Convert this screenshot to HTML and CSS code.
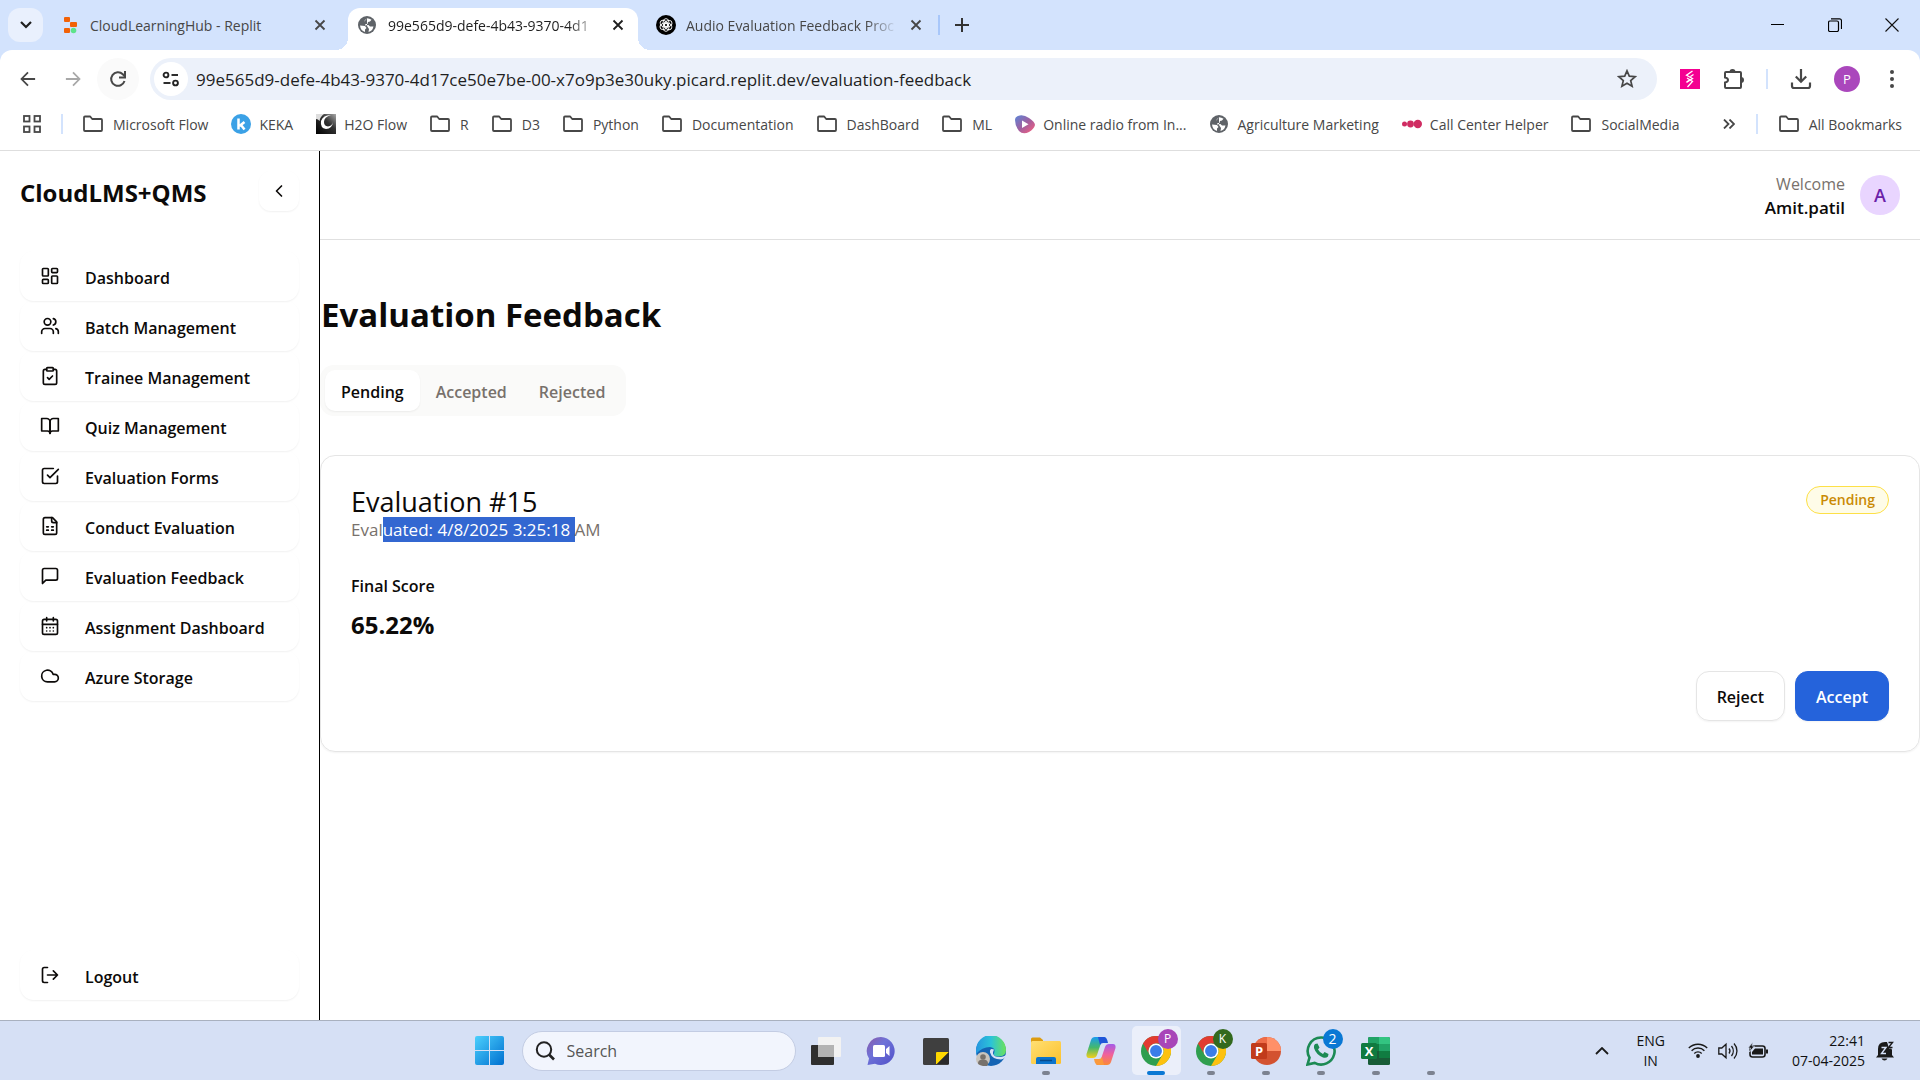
FILE: index.html
```html
<!DOCTYPE html>
<html lang="en">
<head>
<meta charset="utf-8">
<title>Evaluation Feedback</title>
<link rel="stylesheet" href="styles.css">
</head>
<body>
<svg class="sprite" aria-hidden="true">
  <defs>
    <linearGradient id="g-win" x1="0" y1="0" x2="1" y2="1"><stop offset="0" stop-color="#4cd0fd"/><stop offset="1" stop-color="#0070d0"/></linearGradient>
    <linearGradient id="g-chat" x1="0" y1="0" x2="1" y2="1"><stop offset="0" stop-color="#8b5aa8"/><stop offset=".4" stop-color="#6e72d8"/><stop offset="1" stop-color="#5150c8"/></linearGradient>
    <linearGradient id="g-edge" x1="0" y1="0" x2="1" y2="0"><stop offset="0" stop-color="#2596e0"/><stop offset=".5" stop-color="#2bc3d8"/><stop offset="1" stop-color="#6be25a"/></linearGradient>
    <linearGradient id="g-folder" x1="0" y1="0" x2="1" y2="1"><stop offset="0" stop-color="#ffdf73"/><stop offset="1" stop-color="#fcc12c"/></linearGradient>
    <linearGradient id="g-cop1" x1="0" y1="0" x2="0" y2="1"><stop offset="0" stop-color="#1a9cf0"/><stop offset=".5" stop-color="#45b86c"/><stop offset="1" stop-color="#f5cf1b"/></linearGradient>
    <linearGradient id="g-cop2" x1="0" y1="0" x2="0" y2="1"><stop offset="0" stop-color="#a45be8"/><stop offset=".5" stop-color="#f0619c"/><stop offset="1" stop-color="#fb8a35"/></linearGradient>
    <linearGradient id="g-radio" x1="0" y1="0" x2="1" y2="1"><stop offset="0" stop-color="#5b86d8"/><stop offset=".5" stop-color="#a05fa0"/><stop offset="1" stop-color="#ff5f7a"/></linearGradient>
    <linearGradient id="g-h2o" x1="0" y1="1" x2="1" y2="0"><stop offset="0" stop-color="#000"/><stop offset=".6" stop-color="#333"/><stop offset="1" stop-color="#aaa"/></linearGradient>
    <symbol id="folder" viewBox="0 0 20 20"><path d="M1 3.500q0-1 1-1h5.200l2 2.500H18q1 0 1 1V16q0 1-1 1H2q-1 0-1-1z" fill="none" stroke="#474747" stroke-width="1.800" stroke-linejoin="round"/></symbol>
    <symbol id="x" viewBox="0 0 12 12"><path d="M1.500 1.500l9 9M10.500 1.500l-9 9" stroke="currentColor" stroke-width="1.800" fill="none"/></symbol>
    <symbol id="globe" viewBox="0 0 18 18"><circle cx="9" cy="9" r="9" fill="#5f6368"/><path d="M2 9.500l5 .5 1.500 2-1.500 1.500v2.500Q2.500 14.500 2 9.500zM9 2.200q2.500 0 4.500 1.500L12 5.500l-2 .5-.5 2H7.500L7 9.500 10.500 9l1.500 1.500h3.500Q14.500 15 10.500 16l.5-3-2-3M9 2.200L7 4 6 6" fill="#fff"/></symbol>
    <symbol id="chrome" viewBox="0 0 48 48"><circle cx="24" cy="24" r="24" fill="#2f9e4f"/><path d="M3.200 12A24 24 0 0 1 44.800 12H24A12 12 0 0 0 13.600 30z" fill="#e23b30"/><path d="M44.800 12A24 24 0 0 1 24 48L34.400 30A12 12 0 0 0 34.400 18L31 12z" fill="#fdc10f"/><circle cx="24" cy="24" r="12" fill="#fff"/><circle cx="24" cy="24" r="9.500" fill="#3b7de9"/></symbol>
  </defs>
</svg>

<header class="browser">
  <div class="tabstrip">
    <button class="tab-search" aria-label="Search tabs"><svg width="12" height="8" viewBox="0 0 12 8"><path d="M1 1l5 5 5-5" fill="none" stroke="#1f1f1f" stroke-width="2.200"/></svg></button>
    <div class="tab">
      <svg class="fav" viewBox="0 0 20 20"><rect x="4" y="2" width="6" height="5" rx="1" fill="#f26207"/><rect x="10" y="7" width="7" height="5" rx="1" fill="#f26207"/><rect x="4" y="13" width="6" height="5" rx="1" fill="#f26207"/><circle cx="13.500" cy="15.500" r="2.800" fill="#5de38b"/></svg>
      <span class="tab-title">CloudLearningHub - Replit</span>
      <button class="tab-close" aria-label="Close tab"><svg width="12" height="12"><use href="#x"/></svg></button>
    </div>
    <div class="tab tab-active">
      <svg class="fav"><use href="#globe" width="18" height="18" x="0" y="1"/></svg>
      <span class="tab-title tab-fade">99e565d9-defe-4b43-9370-4d1</span>
      <button class="tab-close" aria-label="Close tab"><svg width="12" height="12"><use href="#x"/></svg></button>
    </div>
    <div class="tab">
      <svg class="fav" viewBox="0 0 20 20"><circle cx="10" cy="10" r="10" fill="#000"/><g fill="none" stroke="#fff" stroke-width=".9"><ellipse cx="10" cy="7.600" rx="3" ry="4"/><ellipse cx="10" cy="7.600" rx="3" ry="4" transform="rotate(60 10 10)"/><ellipse cx="10" cy="7.600" rx="3" ry="4" transform="rotate(120 10 10)"/><ellipse cx="10" cy="7.600" rx="3" ry="4" transform="rotate(180 10 10)"/><ellipse cx="10" cy="7.600" rx="3" ry="4" transform="rotate(240 10 10)"/><ellipse cx="10" cy="7.600" rx="3" ry="4" transform="rotate(300 10 10)"/></g></svg>
      <span class="tab-title tab-fade">Audio Evaluation Feedback Proc</span>
      <button class="tab-close" aria-label="Close tab"><svg width="12" height="12"><use href="#x"/></svg></button>
    </div>
    <span class="rule rule-strong"></span>
    <button class="new-tab" aria-label="New tab"><svg width="14" height="14" viewBox="0 0 14 14"><path d="M7 0v14M0 7h14" stroke="#333" stroke-width="2"/></svg></button>
    <div class="window-controls">
      <button aria-label="Minimize"><svg width="14" height="14" viewBox="0 0 14 14"><path d="M0 6.500h13" stroke="#000"/></svg></button>
      <button aria-label="Restore"><svg width="14" height="14" viewBox="0 0 14 14"><rect x=".5" y="3" width="10" height="10.500" rx="1.500" fill="none" stroke="#000" stroke-width="1.200"/><path d="M3 .8h8.500q2 0 2 2V11" fill="none" stroke="#000" stroke-width="1.200"/></svg></button>
      <button aria-label="Close"><svg width="14" height="14" viewBox="0 0 14 14"><path d="M.5.500l13 13M13.500.500l-13 13" stroke="#111" stroke-width="1.100"/></svg></button>
    </div>
  </div>

  <div class="toolbar">
    <button class="tool" aria-label="Back"><svg width="16" height="16" viewBox="0 0 18 18"><path d="M17 9H2M9 1.500L1.700 9 9 16.500" fill="none" stroke="#474747" stroke-width="2"/></svg></button>
    <button class="tool" aria-label="Forward"><svg width="16" height="16" viewBox="0 0 18 18"><path d="M1 9h15M9 1.500L16.300 9 9 16.500" fill="none" stroke="#a8a8a8" stroke-width="2"/></svg></button>
    <button class="tool tool-hover" aria-label="Reload"><svg width="18" height="18" viewBox="0 0 18 18"><path d="M15.500 11A6.800 6.800 0 1 1 13.800 4.200L16 6.500" fill="none" stroke="#474747" stroke-width="2"/><path d="M16 1v6.500h-6" fill="none" stroke="#474747" stroke-width="2"/></svg></button>
    <div class="omnibox">
      <button class="site-info" aria-label="Site information"><svg width="18" height="16" viewBox="0 0 18 16"><g fill="none" stroke="#222" stroke-width="1.900"><circle cx="4" cy="4" r="2.400"/><path d="M9.500 4H16"/><circle cx="13.500" cy="12" r="2.400"/><path d="M1.500 12H8.500"/></g></svg></button>
      <input class="url" type="text" aria-label="Address" value="99e565d9-defe-4b43-9370-4d17ce50e7be-00-x7o9p3e30uky.picard.replit.dev/evaluation-feedback">
      <button class="star" aria-label="Bookmark this tab"><svg width="20" height="20" viewBox="0 0 20 20"><path d="M10 1.800l2.300 5.400 5.900.5-4.500 3.900 1.400 5.700L10 14.200l-5.100 3.100 1.400-5.700L1.800 7.700l5.900-.5z" fill="none" stroke="#474747" stroke-width="1.700"/></svg></button>
    </div>
    <div class="tool-actions">
      <button aria-label="Extension"><svg width="20" height="20" viewBox="0 0 20 20"><rect width="20" height="20" fill="#f40091"/><path d="M12.500 2L6.500 6.200l6 3.300-6 4M13.500 5.500l-3 2M7 9l5.500 3.500-5 5.500M6.500 13l3-2" stroke="#fff" stroke-width="1.300" fill="none"/></svg></button>
      <button aria-label="Extensions"><svg width="22" height="22" viewBox="0 0 22 22"><path d="M3 5q0-1 1-1h14q1 0 1 1v14q0 1-1 1H4q-1 0-1-1v-4.500q3-.5 3-2.500T3 9.500z" fill="none" stroke="#474747" stroke-width="2"/><path d="M7.500 4a3 3 0 0 1 6 0zM19 9a3 3 0 0 1 0 6z" fill="#474747"/></svg></button>
      <span class="rule"></span>
      <button aria-label="Downloads"><svg width="22" height="22" viewBox="0 0 22 22"><path d="M11 1v12M5.800 8.500L11 13.700l5.200-5.200M2 14.500V18q0 2 2 2h14q2 0 2-2v-3.500" fill="none" stroke="#474747" stroke-width="2.200"/></svg></button>
      <button class="profile" aria-label="Profile">P</button>
      <button class="more" aria-label="Menu"><svg width="6" height="20" viewBox="0 0 6 20"><g fill="#474747"><circle cx="3" cy="3" r="2"/><circle cx="3" cy="10" r="2"/><circle cx="3" cy="17" r="2"/></g></svg></button>
    </div>
  </div>

  <nav class="bookmarks" aria-label="Bookmarks">
    <button aria-label="Apps"><svg width="18" height="18" viewBox="0 0 18 18"><g fill="none" stroke="#474747" stroke-width="1.800"><rect x="1" y="1" width="5.500" height="5.500"/><rect x="11.500" y="1" width="5.500" height="5.500"/><rect x="1" y="11.500" width="5.500" height="5.500"/><rect x="11.500" y="11.500" width="5.500" height="5.500"/></g></svg></button>
    <span class="rule"></span>
    <div class="bookmarks-list">
      <a href="#" class="bm bm-folder"><svg><use href="#folder"/></svg>Microsoft Flow</a>
      <a href="#" class="bm"><svg viewBox="0 0 20 20"><circle cx="10" cy="10" r="10" fill="#3ba1e6"/><path d="M7.500 4.500v11M13.500 8l-5 4M10 11l3.500 4.500" stroke="#fff" stroke-width="2.500" fill="none"/></svg>KEKA</a>
      <a href="#" class="bm"><svg viewBox="0 0 20 20"><rect width="20" height="20" fill="url(#g-h2o)"/><path d="M0 0h8Q4 3 3.500 7 2 5 0 5z" fill="#ddd"/><path d="M15 1Q7 1 5 7q-1 7 5 8 6 0 7-7-1 4-5 4.500Q8 12 8 8q0-5 7-7z" fill="#fff"/></svg>H2O Flow</a>
      <a href="#" class="bm bm-folder"><svg><use href="#folder"/></svg>R</a>
      <a href="#" class="bm bm-folder"><svg><use href="#folder"/></svg>D3</a>
      <a href="#" class="bm bm-folder"><svg><use href="#folder"/></svg>Python</a>
      <a href="#" class="bm bm-folder"><svg><use href="#folder"/></svg>Documentation</a>
      <a href="#" class="bm bm-folder"><svg><use href="#folder"/></svg>DashBoard</a>
      <a href="#" class="bm bm-folder"><svg><use href="#folder"/></svg>ML</a>
      <a href="#" class="bm"><svg viewBox="0 0 20 20"><path d="M3 2Q8 0 14 4q6 4 6 7-1 4-6 7-6 3-10-1Q0 12 0 6q0-3 3-4z" fill="url(#g-radio)"/><path d="M7 6.500v7.500l6.500-3.800z" fill="#fff"/></svg>Online radio from In...</a>
      <a href="#" class="bm"><svg viewBox="-1 -1 20 20"><use href="#globe" width="18" height="18"/></svg>Agriculture Marketing</a>
      <a href="#" class="bm"><svg viewBox="0 0 20 20"><g fill="#d02c62"><circle cx="2.500" cy="10" r="2.500"/><circle cx="8.500" cy="10" r="3.400"/><circle cx="15.800" cy="10" r="4.200"/></g></svg>Call Center Helper</a>
      <a href="#" class="bm bm-folder"><svg><use href="#folder"/></svg>SocialMedia</a>
    </div>
    <div class="bookmarks-end">
      <button aria-label="More bookmarks"><svg width="12" height="10" viewBox="0 0 12 10"><path d="M1 .5L5.500 5 1 9.500M6.500.500L11 5 6.500 9.500" fill="none" stroke="#474747" stroke-width="1.800"/></svg></button>
      <span class="rule"></span>
      <a href="#" class="bm bm-folder"><svg><use href="#folder"/></svg>All Bookmarks</a>
    </div>
  </nav>
</header>

<div class="app">
  <aside class="sidebar">
    <div class="brand">
      <span class="brand-name">CloudLMS+QMS</span>
      <button class="collapse" aria-label="Collapse sidebar"><svg class="icon" viewBox="0 0 24 24"><path d="m15 18-6-6 6-6"/></svg></button>
    </div>
    <nav class="menu" aria-label="Main">
      <a href="#"><svg class="icon" viewBox="0 0 24 24"><rect width="7" height="9" x="3" y="3" rx="1"/><rect width="7" height="5" x="14" y="3" rx="1"/><rect width="7" height="9" x="14" y="12" rx="1"/><rect width="7" height="5" x="3" y="16" rx="1"/></svg><span>Dashboard</span></a>
      <a href="#"><svg class="icon" viewBox="0 0 24 24"><path d="M16 21v-2a4 4 0 0 0-4-4H6a4 4 0 0 0-4 4v2"/><circle cx="9" cy="7" r="4"/><path d="M22 21v-2a4 4 0 0 0-3-3.870"/><path d="M16 3.130a4 4 0 0 1 0 7.750"/></svg><span>Batch Management</span></a>
      <a href="#"><svg class="icon" viewBox="0 0 24 24"><rect width="8" height="4" x="8" y="2" rx="1"/><path d="M16 4h2a2 2 0 0 1 2 2v14a2 2 0 0 1-2 2H6a2 2 0 0 1-2-2V6a2 2 0 0 1 2-2h2"/><path d="m9 14 2 2 4-4"/></svg><span>Trainee Management</span></a>
      <a href="#"><svg class="icon" viewBox="0 0 24 24"><path d="M2 3h6a4 4 0 0 1 4 4v14a3 3 0 0 0-3-3H2z"/><path d="M22 3h-6a4 4 0 0 0-4 4v14a3 3 0 0 1 3-3h7z"/></svg><span>Quiz Management</span></a>
      <a href="#"><svg class="icon" viewBox="0 0 24 24"><path d="m9 11 3 3L22 4"/><path d="M21 12v7a2 2 0 0 1-2 2H5a2 2 0 0 1-2-2V5a2 2 0 0 1 2-2h11"/></svg><span>Evaluation Forms</span></a>
      <a href="#"><svg class="icon" viewBox="0 0 24 24"><path d="M15 2H6a2 2 0 0 0-2 2v16a2 2 0 0 0 2 2h12a2 2 0 0 0 2-2V7Z"/><path d="M14 2v4a2 2 0 0 0 2 2h4M8 13h2M14 13h2M8 17h2M14 17h2"/></svg><span>Conduct Evaluation</span></a>
      <a href="#"><svg class="icon" viewBox="0 0 24 24"><path d="M21 15a2 2 0 0 1-2 2H7l-4 4V5a2 2 0 0 1 2-2h14a2 2 0 0 1 2 2z"/></svg><span>Evaluation Feedback</span></a>
      <a href="#"><svg class="icon" viewBox="0 0 24 24"><path d="M8 2v4M16 2v4"/><rect width="18" height="18" x="3" y="4" rx="2"/><path d="M3 10h18M8 14h.01M12 14h.01M16 14h.01M8 18h.01M12 18h.01M16 18h.01"/></svg><span>Assignment Dashboard</span></a>
      <a href="#"><svg class="icon" viewBox="0 0 24 24"><path d="M17.500 19H9a7 7 0 1 1 6.710-9h1.790a4.500 4.500 0 1 1 0 9Z"/></svg><span>Azure Storage</span></a>
      <a href="#" class="logout"><svg class="icon" viewBox="0 0 24 24"><path d="M9 21H5a2 2 0 0 1-2-2V5a2 2 0 0 1 2-2h4M16 17l5-5-5-5M21 12H9"/></svg><span>Logout</span></a>
    </nav>
  </aside>

  <div class="page">
    <header class="topbar">
      <div class="user"><span class="muted">Welcome</span><span class="user-name">Amit.patil</span></div>
      <span class="avatar">A</span>
    </header>
    <main class="content">
      <h1>Evaluation Feedback</h1>
      <div class="tabs" role="tablist">
        <button role="tab" aria-selected="true" class="selected">Pending</button>
        <button role="tab" aria-selected="false">Accepted</button>
        <button role="tab" aria-selected="false">Rejected</button>
      </div>
      <section class="card">
        <div class="card-head">
          <div>
            <h2>Evaluation #15</h2>
            <p class="muted date">Eval<mark>uated: 4/8/2025 3:25:18 </mark>AM</p>
          </div>
          <span class="status">Pending</span>
        </div>
        <h3>Final Score</h3>
        <p class="score">65.22%</p>
        <div class="actions">
          <button class="btn">Reject</button>
          <button class="btn btn-primary">Accept</button>
        </div>
      </section>
    </main>
  </div>
</div>

<footer class="taskbar">
  <div class="task-apps">
    <button class="slot" aria-label="Start"><svg width="29" height="29" viewBox="0 0 29 29"><path d="M0 2q0-2 2-2h12v14H0zM15 0h12q2 0 2 2v12H15zM0 15h14v14H2q-2 0-2-2zM15 15h14v12q0 2-2 2H15z" fill="url(#g-win)"/></svg></button>
    <label class="task-search"><svg width="20" height="20" viewBox="0 0 20 20"><circle cx="9" cy="8.500" r="7.200" fill="none" stroke="#222" stroke-width="2"/><path d="M14 13.500l5 5" stroke="#222" stroke-width="2.600"/></svg><input type="search" placeholder="Search" aria-label="Search"></label>
    <button class="slot" aria-label="Task view"><svg width="30" height="30" viewBox="0 0 30 30"><rect x="0" y="9" width="23" height="20" rx="1" fill="#2f2f2f"/><rect x="7" y="1" width="23" height="20" rx="1" fill="#f2f2f2"/><rect x="7" y="9" width="16" height="12" fill="#b3b3b3"/></svg></button>
    <button class="slot" aria-label="Chat"><svg width="30" height="30" viewBox="0 0 30 30"><path d="M15 1a14 14 0 1 1-6 26.800L1.500 29l1.500-6.500A14 14 0 0 1 15 1z" fill="url(#g-chat)"/><rect x="7" y="9" width="12" height="12" rx="1.500" fill="#fff"/><path d="M20 13l3.500-3v10L20 17z" fill="#fff"/></svg></button>
    <button class="slot" aria-label="Sticky notes"><svg width="26" height="28" viewBox="0 0 26 28"><rect width="26" height="27" y="1" rx="1.500" fill="#3f3f3f"/><path d="M13 16q0-1 1-1h12L14 27h-1z" fill="#ffd800"/><path d="M26 15v12H14z" fill="#2a2a2a"/></svg></button>
    <button class="slot" aria-label="Edge"><svg width="30" height="30" viewBox="0 0 30 30"><circle cx="15" cy="15" r="15" fill="#1464b4"/><path d="M0 14A15 15 0 0 1 30 14q0 6-7 6.500-6 0-5-3 2-6-4-6.500Q6 11 0 18z" fill="url(#g-edge)"/><path d="M18 13.500q-1 2-1 4 1 4 8 3.500 3-.5 5-2-1 4-5 4.500-9 0-11-7-.5-5 4-3z" fill="#d8e2f6"/><circle cx="7" cy="23" r="7" fill="#c9c4bd"/><circle cx="7" cy="21" r="2.800" fill="#77716b"/><path d="M2 27.500q0-4 5-4t5 4-5 2.500-5-2.500z" fill="#77716b"/></svg></button>
    <button class="slot running" aria-label="File Explorer"><svg width="30" height="30" viewBox="0 0 30 30"><path d="M0 3q0-1.500 1.500-1.500H9l3 2.500v5H0z" fill="#dd9c10"/><rect y="5" width="30" height="23" rx="1.500" fill="url(#g-folder)"/><path d="M5 28v-5q0-2 2-2h16q2 0 2 2v5z" fill="#0c74cc"/><path d="M9 24.500h12" stroke="#074a8a" stroke-width="1.500"/></svg></button>
    <button class="slot" aria-label="Copilot"><svg width="30" height="30" viewBox="0 0 30 30"><path d="M9 1h11l-4 3-5 15q-1 3-4 3H3q-3 0-2.500-4L5 4q1-3 4-3z" fill="url(#g-cop1)"/><path d="M12 1h6q3 0 4 6h-5q-2 0-3 2z" fill="#1f55d8"/><path d="M21 29H10l4-3 5-15q1-3 4-3h4q3 0 2.500 4L25 26q-1 3-4 3z" fill="url(#g-cop2)"/><path d="M18 29h-6q-3 0-4-6h5q2 0 3-2z" fill="#fb9a3c"/></svg></button>
    <button class="slot current" aria-label="Chrome, profile P"><svg width="30" height="30"><use href="#chrome"/></svg><span class="badge badge-p">P</span></button>
    <button class="slot running" aria-label="Chrome, profile K"><svg width="30" height="30"><use href="#chrome"/></svg><span class="badge badge-k">K</span></button>
    <button class="slot running" aria-label="PowerPoint"><svg width="30" height="30" viewBox="0 0 30 30"><circle cx="16" cy="15" r="14" fill="#d35230"/><path d="M16 1a14 14 0 0 1 14 14H16z" fill="#ff9068"/><path d="M16 1v14H2A14 14 0 0 1 16 1z" fill="#ee6c47"/><rect y="7" width="16" height="16" rx="1.500" fill="#c13b1b"/><text x="8" y="20" class="glyph">P</text></svg></button>
    <button class="slot running" aria-label="WhatsApp"><svg width="30" height="30" viewBox="0 0 30 30"><path d="M15 1.500a13.500 13.500 0 1 1-6.300 25.400L1.500 28.500l2-6.800A13.500 13.500 0 0 1 15 1.500z" fill="none" stroke="#1c8a54" stroke-width="2.600"/><path d="M9 8l2.500-.5 2 4-1.500 2q2 3.500 5 4.500l1.500-2 4 2-.5 2.500q-2 2-5 1Q10 18.500 8 12q-.5-2.500 1-4z" fill="#1c8a54"/></svg><span class="badge badge-n">2</span></button>
    <button class="slot running" aria-label="Excel"><svg width="30" height="30" viewBox="0 0 30 30"><rect x="7" y="1" width="22" height="28" rx="1.500" fill="#185c37"/><path d="M7 2.500Q7 1 8.500 1H18v7H7z" fill="#21a366"/><path d="M18 1h9.500Q29 1 29 2.500V8H18z" fill="#33c481"/><path d="M7 8h11v7H7z" fill="#107c41"/><path d="M18 8h11v7H18z" fill="#21a366"/><path d="M18 15h11v7H18z" fill="#107c41"/><rect y="7" width="16" height="16" rx="1.500" fill="#0f7a40"/><text x="8" y="20" class="glyph">X</text></svg></button>
    <button class="slot running" aria-label="Running app"></button>
  </div>
  <div class="tray">
    <svg width="14" height="8" viewBox="0 0 14 8"><path d="M1 7l6-6 6 6" fill="none" stroke="#1a1a1a" stroke-width="1.800"/></svg>
    <div class="lang"><span>ENG</span><span>IN</span></div>
    <div class="tray-icons">
      <svg width="20" height="16" viewBox="0 0 20 16"><g fill="none" stroke="#1a1a1a" stroke-width="1.400"><path d="M.8 6a13 13 0 0 1 18.400 0M3.600 8.700a9 9 0 0 1 12.800 0M6.300 11.400a5.200 5.200 0 0 1 7.400 0"/></g><circle cx="10" cy="14" r="1.900" fill="#1a1a1a"/></svg>
      <svg width="20" height="18" viewBox="0 0 20 18"><path d="M.8 6h3L8 2.200v13.600L3.800 12h-3zM11 6.500a4 4 0 0 1 0 5M13.500 4a8 8 0 0 1 0 10M16 1.500a11 11 0 0 1 0 15" fill="none" stroke="#1a1a1a" stroke-width="1.300"/></svg>
      <svg width="20" height="18" viewBox="0 0 20 18"><rect x="2" y="4" width="15" height="11" rx="2.500" fill="none" stroke="#1a1a1a" stroke-width="1.600"/><path d="M7 6.500h8v6H4V10z" fill="#1a1a1a"/><path d="M18 7.500h2v4h-2z" fill="#1a1a1a"/><path d="M5 0L0 6h2.500L1.500 10l5-6H4z" fill="#1a1a1a" stroke="#d6e1f7" stroke-width=".7"/></svg>
    </div>
    <div class="clock"><span>22:41</span><span>07-04-2025</span></div>
    <svg width="18" height="20" viewBox="0 0 18 20"><path d="M2 14V8q0-7 7-7h2q4 4 5 8v5l2 2.500H0zM5.500 17.500h6q-1 2-3 2t-3-2z" fill="#1a1a1a"/><path d="M5.500 6.500h4.500l-4.500 6H10" fill="none" stroke="#d6e1f7" stroke-width="1.400"/><path d="M11 .5h7v7h-5z" fill="#d6e1f7"/><path d="M12.500 1.500h4l-4 5h4" fill="none" stroke="#1a1a1a" stroke-width="1.400"/></svg>
  </div>
</footer>
</body>
</html>
```

FILE: styles.css
```css
* { box-sizing: border-box; }

body {
  margin: 0;
  min-height: 100vh;
  display: flex;
  flex-direction: column;
  font-family: "Open Sans", "Noto Sans", sans-serif;
  font-size: 16px;
  color: #0c0a09;
  background: #fff;
}

button {
  display: inline-flex;
  align-items: center;
  justify-content: center;
  padding: 0;
  border: 0;
  background: none;
  font: inherit;
  color: inherit;
}

a { color: inherit; text-decoration: none; }
h1, h2, h3, p { margin: 0; }
svg { flex: none; display: block; }
.sprite { width: 0; height: 0; position: absolute; }

/* Browser chrome */
.browser { background: #d3e3fd; border-bottom: 1px solid #dedede; color: #474747; font-size: 14px; }

.tabstrip { display: flex; align-items: center; height: 50px; padding-left: 8px; }
.tab-search { width: 35px; height: 34px; margin-right: 7px; border-radius: 12px; background: #e9f0fd; }
.tab { display: flex; align-items: center; gap: 10px; width: 290px; height: 50px; padding: 0 12px 0 10px; }
.tab + .tab { margin-left: 8px; }
.tab-active { position: relative; height: 42px; align-self: flex-end; padding-bottom: 8px; border-radius: 12px 12px 0 0; background: #fff; color: #1f1f1f; }
.tab-active::before, .tab-active::after {
  content: "";
  position: absolute;
  bottom: 0;
  width: 12px;
  height: 12px;
}
.tab-active::before { left: -12px; background: radial-gradient(circle at 0 0, #d3e3fd 12px, #fff 12px); }
.tab-active::after { right: -12px; background: radial-gradient(circle at 100% 0, #d3e3fd 12px, #fff 12px); }
.fav { width: 20px; height: 20px; }
.tab-title { flex: 1; white-space: nowrap; }
.tab-fade {
  -webkit-mask-image: linear-gradient(90deg, #000 85%, transparent 100%);
  mask-image: linear-gradient(90deg, #000 85%, transparent 100%);
}
.tab-close { width: 16px; height: 16px; }
.rule { flex: none; width: 2px; height: 20px; background: #d3e3fd; }
.rule-strong { margin: 0 2px; background: #a8c7fa; }
.new-tab { width: 40px; height: 40px; }
.window-controls { display: flex; margin-left: auto; }
.window-controls button { width: 57px; height: 50px; }

.toolbar { display: flex; align-items: center; height: 60px; padding: 0 18px 2px 7px; border-radius: 12px 12px 0 0; background: #fff; }
.tool { width: 42px; height: 42px; margin-right: 3px; border-radius: 50%; }
.tool-hover { background: #fafafa; }
.omnibox { flex: 1; display: flex; align-items: center; height: 42px; margin-left: 8px; padding: 0 20px 0 4px; border-radius: 21px; background: #ecf1fa; }
.site-info { width: 34px; height: 34px; border-radius: 50%; background: #fff; }
.url {
  flex: 1;
  min-width: 0;
  padding: 0 8px;
  border: 0;
  outline: 0;
  background: none;
  font: 17px "Open Sans", "Noto Sans", sans-serif;
  color: #1f1f1f;
}
.tool-actions { display: flex; align-items: center; gap: 22px; margin-left: 23px; }
.profile { width: 26px; height: 26px; border-radius: 50%; background: #aa47bc; color: #fff; font-size: 13px; }
.more { width: 20px; }

.bookmarks { display: flex; align-items: center; gap: 20px; height: 40px; padding: 0 18px 12px 23px; background: #fff; white-space: nowrap; }
.bookmarks-list { display: flex; align-items: center; gap: 23px; }
.bm { display: flex; align-items: center; gap: 8px; }
.bm-folder { gap: 10px; }
.bm svg { width: 20px; height: 20px; }
.bookmarks-end { display: flex; align-items: center; gap: 21px; margin-left: auto; }

/* Application shell */
.app { flex: 1; display: flex; }
.sidebar { display: flex; flex-direction: column; width: 320px; padding: 20px; border-right: 1px solid #000; }
.brand { display: flex; align-items: center; justify-content: space-between; height: 40px; margin-bottom: 40px; }
.brand-name { padding-top: 2px; font-size: 24px; font-weight: 700; }
.collapse { width: 40px; height: 40px; border-radius: 12px; box-shadow: 0 1px 2px rgba(0, 0, 0, .06); }
.icon { width: 20px; height: 20px; fill: none; stroke: currentColor; stroke-width: 2; stroke-linecap: round; stroke-linejoin: round; }
.menu { flex: 1; display: flex; flex-direction: column; }
.menu a { display: flex; align-items: center; gap: 25px; height: 50px; padding: 0 20px; border-radius: 14px; box-shadow: 0 1px 2px rgba(0, 0, 0, .06); font-weight: 600; white-space: nowrap; }
.menu span { padding-top: 4px; }
.menu .logout { margin-top: auto; }

.page { flex: 1; min-width: 0; display: flex; flex-direction: column; }
.topbar { display: flex; align-items: center; justify-content: flex-end; gap: 15px; height: 89px; padding: 0 20px; border-bottom: 1px solid #e0e0e0; }
.user { display: flex; flex-direction: column; align-items: flex-end; padding-top: 2px; line-height: 24px; }
.user-name { font-size: 17px; font-weight: 600; }
.muted { color: #78716c; }
.avatar { display: flex; align-items: center; justify-content: center; width: 40px; height: 40px; border-radius: 50%; background: #e9d5ff; color: #6b21a8; font-size: 18px; font-weight: 600; }

.content { padding-top: 52px; }
h1 { padding-left: 1px; font-size: 33px; line-height: 45px; font-weight: 700; }
.tabs { display: inline-flex; margin: 28px 0 39px; padding: 5px; border-radius: 14px; background: #fafaf9; }
.tabs button { height: 41px; padding: 2px 16px 0; border-radius: 10px; font-weight: 600; color: #78716c; }
.tabs .selected { background: #fff; color: #0c0a09; box-shadow: 0 1px 2px rgba(0, 0, 0, .06); }

.card { padding: 30px; border: 1px solid #e5e5e5; border-radius: 15px; box-shadow: 0 1px 2px rgba(0, 0, 0, .05); }
.card-head { display: flex; align-items: flex-start; justify-content: space-between; margin-bottom: 32px; }
h2 { padding-top: 1px; font-size: 27px; line-height: 30px; font-weight: 500; }
.date { font-size: 17px; line-height: 25px; white-space: pre; }
mark { display: inline-block; background: #3367d1; color: #fff; }
.status { padding: 0 13px; border: 1px solid #fde047; border-radius: 14px; background: #fefce8; color: #ca8a04; font-size: 14px; line-height: 26px; font-weight: 600; }
h3 { font-size: 16px; line-height: 24px; font-weight: 600; }
.score { margin: 9px 0 29px; font-size: 24px; line-height: 35px; font-weight: 700; }
.actions { display: flex; justify-content: flex-end; gap: 10px; }
.btn { height: 50px; padding: 2px 20px 0; border: 1px solid #e5e5e5; border-radius: 13px; font-weight: 600; box-shadow: 0 1px 2px rgba(0, 0, 0, .05); }
.btn-primary { border-color: #2563db; background: #2563db; color: #fff; }

/* Desktop taskbar */
.taskbar { position: relative; display: flex; justify-content: center; height: 60px; border-top: 1px solid #a9b1bf; background: #d6e0f5; }
.task-apps { display: flex; align-items: center; }
.slot { position: relative; width: 55px; height: 59px; }
.current::before { content: ""; position: absolute; inset: 5px 3px; z-index: 0; border-radius: 5px; background: #ebeffa; }
.current svg { position: relative; }
.running::after, .current::after { content: ""; position: absolute; bottom: 5px; left: 50%; width: 8px; height: 4px; margin-left: -4px; border-radius: 2px; background: #7c8290; }
.current::after { width: 18px; margin-left: -9px; background: #0a78d4; }
.badge { position: absolute; top: 8px; right: 6px; width: 20px; height: 20px; border-radius: 50%; color: #fff; font-size: 12px; line-height: 20px; text-align: center; }
.badge-p { background: #a845b8; }
.badge-k { background: #33691e; }
.badge-n { background: #0a78d4; font-size: 14px; }
.glyph { fill: #fff; font: 700 13px "Open Sans", sans-serif; text-anchor: middle; }
.task-search { display: flex; align-items: center; gap: 12px; width: 274px; height: 40px; margin: 0 3px 0 5px; padding: 0 12px; border: 1px solid #c3cce3; border-radius: 20px; background: #f2f5fd; }
.task-search input { flex: 1; min-width: 0; padding: 0; border: 0; outline: 0; background: none; font: 16px "Open Sans", "Noto Sans", sans-serif; }
.task-search input::placeholder { color: #555; opacity: 1; }
.tray { position: absolute; right: 26px; top: 0; height: 59px; display: flex; align-items: center; font-size: 14px; line-height: 20px; color: #111; }
.lang { display: flex; flex-direction: column; align-items: center; margin-left: 27px; }
.tray-icons { display: flex; gap: 10px; margin-left: 23px; }
.clock { display: flex; flex-direction: column; align-items: flex-end; margin: 0 11px 0 24px; }
```
